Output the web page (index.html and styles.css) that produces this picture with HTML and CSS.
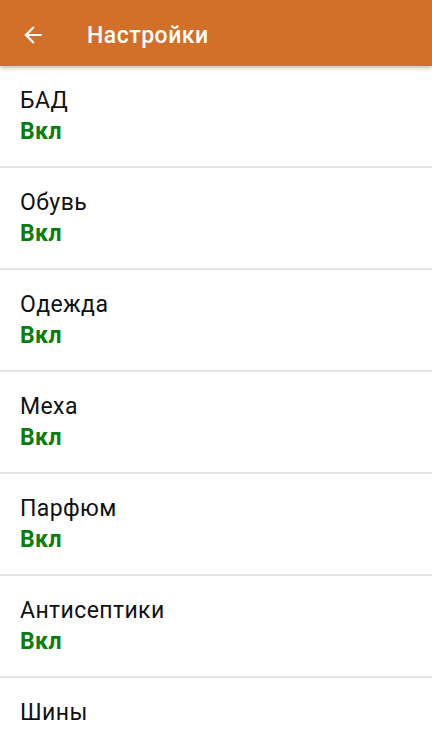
FILE: index.html
```html
<!DOCTYPE html>
<html lang="ru">
<head>
<meta charset="utf-8">
<link rel="stylesheet" href="styles.css">
</head>
<body>
<header class="appbar">
  <svg class="back" width="26" height="26" viewBox="0 0 24 24"><path d="M20 11H7.83l5.59-5.59L12 4l-8 8 8 8 1.41-1.41L7.83 13H20v-2z" fill="#fff"/></svg>
  <h1 class="title">Настройки</h1>
</header>
<main class="list">
  <div class="row"><div class="name">БАД</div><div class="val">Вкл</div></div>
  <div class="row"><div class="name">Обувь</div><div class="val">Вкл</div></div>
  <div class="row"><div class="name">Одежда</div><div class="val">Вкл</div></div>
  <div class="row"><div class="name">Меха</div><div class="val">Вкл</div></div>
  <div class="row"><div class="name">Парфюм</div><div class="val">Вкл</div></div>
  <div class="row"><div class="name">Антисептики</div><div class="val">Вкл</div></div>
  <div class="row"><div class="name">Шины</div></div>
</main>
</body>
</html>
```
FILE: styles.css
```css
html, body { margin: 0; padding: 0; }
body {
  width: 432px;
  height: 739px;
  overflow: hidden;
  background: #fff;
  font-family: Roboto, "Noto Sans", sans-serif;
}
.appbar {
  height: 66px;
  background: #d2702a;
  display: flex;
  align-items: center;
  box-shadow: 0 2px 4px rgba(0,0,0,0.25);
  position: relative;
  z-index: 1;
}
.back { margin-left: 20px; width: 26px; height: 26px; margin-top: 3px; }
.title {
  margin: 5px 0 0 41px;
  color: #fff;
  font-size: 23px;
  font-weight: 500;
  line-height: 28px;
  letter-spacing: 0.5px;
}
.list { display: flex; flex-direction: column; }
.row {
  height: 102px;
  flex: none;
  border-bottom: 2px solid #e2e2e2;
  padding: 21px 20px 0;
  box-sizing: border-box;
  display: flex;
  flex-direction: column;
}
.name { font-size: 23px; line-height: 27px; color: #111; letter-spacing: 0.4px; }
.val { font-size: 23px; line-height: 27px; margin-top: 4px; font-weight: 700; color: #0b7d0b; letter-spacing: 0.4px; }
```
